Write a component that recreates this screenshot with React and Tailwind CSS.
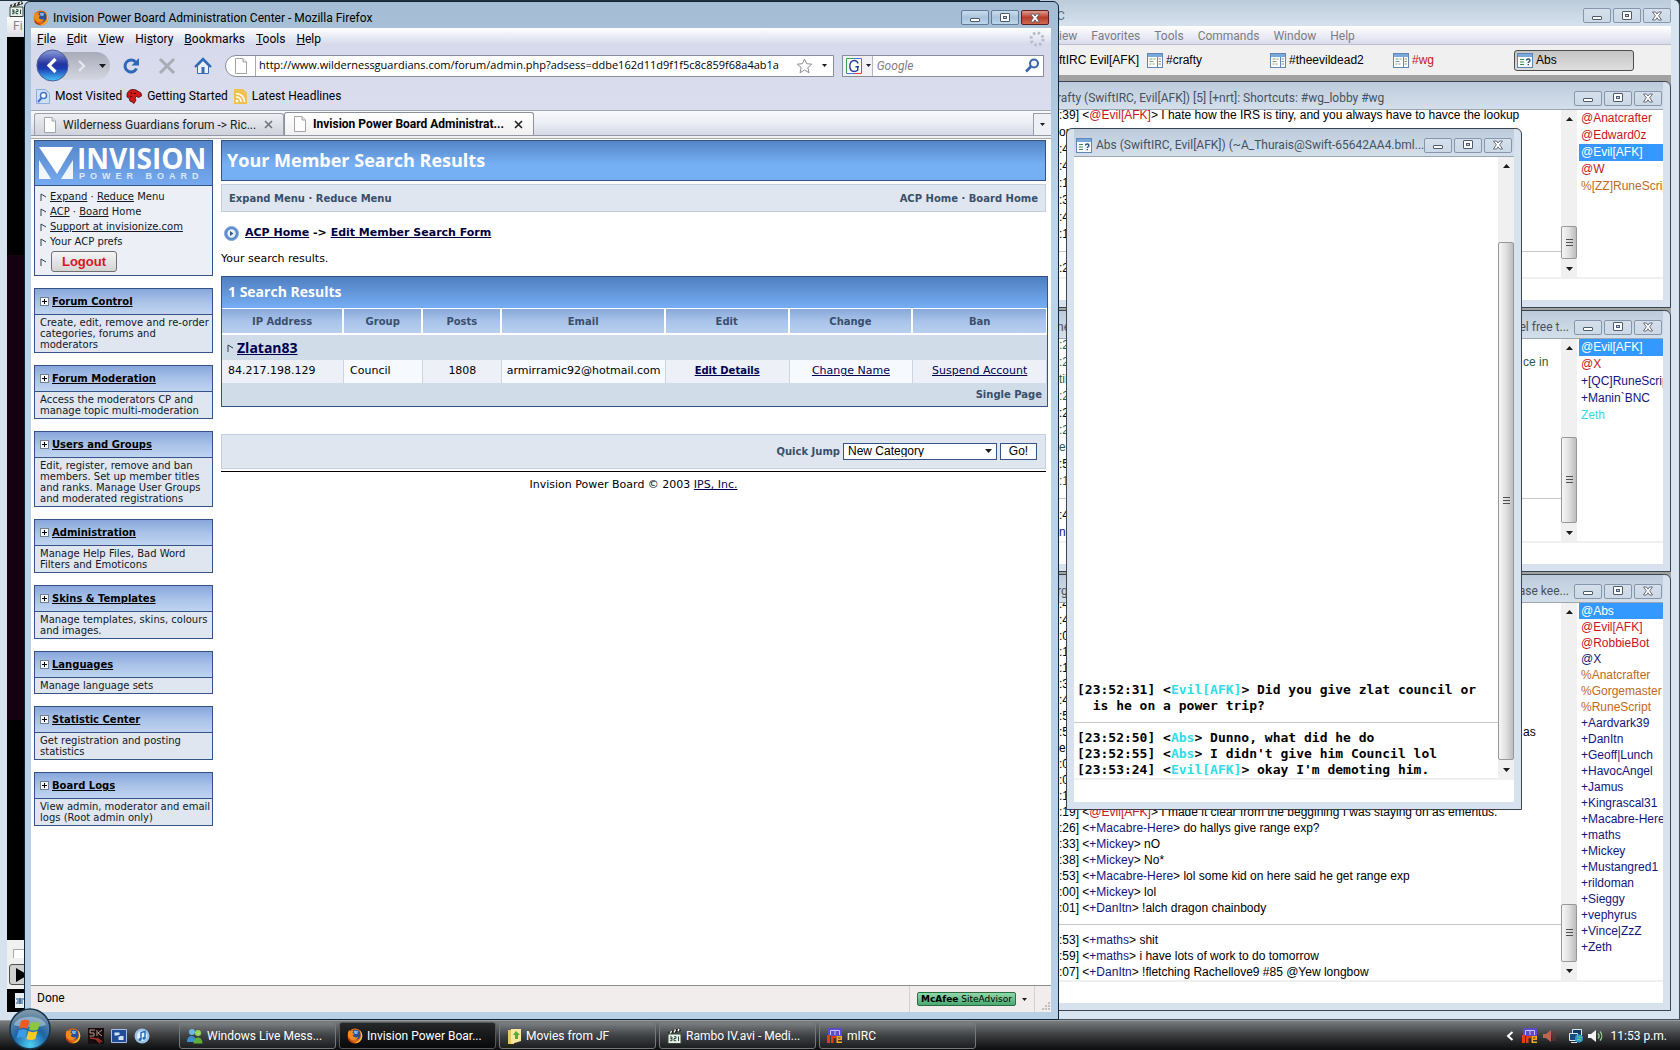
import React, { useState } from "react";

const UI = "font-['Roboto','Open_Sans',sans-serif]";

// Sidebar sections of the admin panel
const sections = [
  { title: "Forum Control", text: "Create, edit, remove and re-order categories, forums and moderators" },
  { title: "Forum Moderation", text: "Access the moderators CP and manage topic multi-moderation" },
  { title: "Users and Groups", text: "Edit, register, remove and ban members. Set up member titles and ranks. Manage User Groups and moderated registrations" },
  { title: "Administration", text: "Manage Help Files, Bad Word Filters and Emoticons" },
  { title: "Skins & Templates", text: "Manage templates, skins, colours and images." },
  { title: "Languages", text: "Manage language sets" },
  { title: "Statistic Center", text: "Get registration and posting statistics" },
  { title: "Board Logs", text: "View admin, moderator and email logs (Root admin only)" },
];

const RED = "text-[#c8141c]";
const NAVY = "text-[#14147c]";
const ORANGE = "text-[#c06a20]";
const GREEN = "text-[#2c5c3c]";

const craftyLog = [
  { time: ":39]", nick: "@Evil[AFK]", color: RED, text: "I hate how the IRS is tiny, and you always have to havce the lookup" },
  { raw: "on" },
  { raw: ":4" },
  { raw: ":4" },
  { raw: ":1" },
  { raw: ":3" },
  { raw: ":4" },
  { raw: ":1" },
  { rule: true },
  { raw: ":2" },
];

const deadLog = [
  { raw: ":2", color: GREEN },
  { raw: ":2", color: GREEN, tail: "ce in" },
  { raw: "til", color: GREEN },
  { raw: ":2", color: GREEN },
  { raw: ":2" },
  { raw: ":2", color: GREEN },
  { raw: "e", color: GREEN },
  { raw: ":5" },
  { raw: ":1", color: GREEN },
  { rule: true },
  { raw: ":4" },
  { raw: "n", color: NAVY },
];

const wgLog = [
  { raw: ":4" },
  { raw: ":4" },
  { raw: ":0" },
  { raw: ":1" },
  { raw: ":1" },
  { raw: ":3" },
  { raw: ":4" },
  { raw: ":5" },
  { raw: ":5", tail: "as" },
  { raw: "e" },
  { raw: ":0" },
  { raw: ":0" },
  { raw: ":1" },
  { time: ":19]", nick: "@Evil[AFK]", color: RED, text: "I made it clear from the beggining I was staying on as emeritus." },
  { time: ":26]", nick: "+Macabre-Here", color: NAVY, text: "do hallys give range exp?" },
  { time: ":33]", nick: "+Mickey", color: NAVY, text: "nO" },
  { time: ":38]", nick: "+Mickey", color: NAVY, text: "No*" },
  { time: ":53]", nick: "+Macabre-Here", color: NAVY, text: "lol some kid on here said he get range exp" },
  { time: ":00]", nick: "+Mickey", color: NAVY, text: "lol" },
  { time: ":01]", nick: "+DanItn", color: NAVY, text: "!alch dragon chainbody" },
  { rule: true },
  { time: ":53]", nick: "+maths", color: NAVY, text: "shit" },
  { time: ":59]", nick: "+maths", color: NAVY, text: "i have lots of work to do tomorrow" },
  { time: ":07]", nick: "+DanItn", color: NAVY, text: "!fletching Rachellove9 #85 @Yew longbow" },
];

const craftyNicks = [
  ["@Anatcrafter", RED],
  ["@Edward0z", RED],
  ["@Evil[AFK]", RED],
  ["@W", RED],
  ["%[ZZ]RuneScript", ORANGE],
];

const deadNicks = [
  ["@Evil[AFK]", RED],
  ["@X", RED],
  ["+[QC]RuneScript", NAVY],
  ["+Manin`BNC", NAVY],
  ["Zeth", "text-[#30dce8]"],
];

const wgNicks = [
  ["@Abs", RED],
  ["@Evil[AFK]", RED],
  ["@RobbieBot", RED],
  ["@X", NAVY],
  ["%Anatcrafter", ORANGE],
  ["%Gorgemaster", ORANGE],
  ["%RuneScript", ORANGE],
  ["+Aardvark39", NAVY],
  ["+DanItn", NAVY],
  ["+Geoff|Lunch", NAVY],
  ["+HavocAngel", NAVY],
  ["+Jamus", NAVY],
  ["+Kingrascal31", NAVY],
  ["+Macabre-Here", NAVY],
  ["+maths", NAVY],
  ["+Mickey", NAVY],
  ["+Mustangred1", NAVY],
  ["+rildoman", NAVY],
  ["+Sieggy", NAVY],
  ["+vephyrus", NAVY],
  ["+Vince|ZzZ", NAVY],
  ["+Zeth", NAVY],
];

/* ---------- icons ---------- */

function FirefoxIcon({ size = 16 }) {
  return (
    <svg width={size} height={size} viewBox="0 0 16 16" className="shrink-0">
      <circle cx="8" cy="8" r="7.4" fill="#d9661a" />
      <circle cx="8.6" cy="6.8" r="5" fill="#2c4f96" />
      <path d="M7 3.2c1.6-.9 3.6-.5 4.6.5-1 .1-1.4.7-1 1.4.4.8-.6 1.3-1.4 1-.9-.3-2.400-.4-2.200-2.900z" fill="#7fb4e6" />
      <path d="M1 4.200 2.200 2l1 1.400c1.300-.9 2.600-.7 3.400-.2-.9.5-1.200 1.100-1 1.800l1.700.4c-.2.900-1 1.200-1.500 1.600.2 2.400 3.300 3.100 5.200 1.700-.6 2.900-3.900 4.300-6.600 3.100C1.600 10.500.400 7.500 1 4.200z" fill="#f28a1e" />
      <path d="M12.600 2.300c2.600 2 3.400 5.600 1.900 8.700-1.600 3.200-5.300 4.700-8.700 3.600 3.900.2 7.300-2 8-5.600.4-2.500-.1-4.500-1.200-6.700z" fill="#fbc52c" />
      <path d="M2 10c1.200 3 4 4.400 7 4.100-2.600 1.300-6 .4-7.500-2.100z" fill="#b93a12" />
    </svg>
  );
}

function PageIcon() {
  return (
    <svg width="14" height="16" viewBox="0 0 14 16" className="shrink-0">
      <path d="M1.500.5h7.500l3.500 3.500v11.500h-11z" fill="#fdfdfd" stroke="#a4a4a8" />
      <path d="M9 .5v3.500h3.500" fill="#e6e6ea" stroke="#a4a4a8" />
    </svg>
  );
}

function ChannelIcon() {
  return (
    <svg width="16" height="15" viewBox="0 0 16 15" className="shrink-0">
      <rect x=".5" y=".5" width="15" height="14" fill="#fff" stroke="#5f86b4" />
      <path d="M1 1h14v3H1z" fill="#79a8dc" />
      <path d="M10.500 4v10" stroke="#5f86b4" />
      <path d="M2.500 6h3m1 0h2m-6 2.500h4m-4 2.500h2m1 0h2m4-5h2.500m-2.500 2.500h2.500m-2.500 2.500h2.500" stroke="#8a9c74" />
    </svg>
  );
}

function QueryIcon() {
  return (
    <svg width="16" height="15" viewBox="0 0 16 15" className="shrink-0">
      <rect x=".5" y=".5" width="15" height="14" fill="#f4faff" stroke="#5f86b4" />
      <path d="M1 1h14v3H1z" fill="#79a8dc" />
      <path d="M3 6.500h4m-4 2.500h4m-4 2.500h4" stroke="#3f8a50" />
      <path d="M9.500 7.500c0-2 3.500-2 3.500 0 0 1.300-1.700 1.200-1.700 2.500m0 1v1.200" stroke="#28507c" strokeWidth="1.300" fill="none" />
    </svg>
  );
}

function MircIcon() {
  return (
    <svg width="16" height="17" viewBox="0 0 16 17" className="shrink-0">
      <path d="M1 1h14v8H1z" fill="#5a4cc8" />
      <path d="M3.500 8V3.500h9V8M8 3.500V8" stroke="#c8c0ff" fill="none" />
      <path d="M0 8h3v8H0zM4 9h5v2H6.500v5H4z" fill="#e83c18" />
      <path d="M9.500 9H15v4h-4v1.500h4V16H9.500zM11 10.500v1h2.500v-1z" fill="#f8a820" fillRule="evenodd" />
    </svg>
  );
}

function ClapperIcon() {
  return (
    <svg width="15" height="16" viewBox="0 0 15 16" className="shrink-0">
      <path d="M1 4 13 0l1 3L2 7z" fill="#222" />
      <path d="m3 6 1.500-3M7 4.500 8.500 1.500M11 3.300l1-2.600" stroke="#f4f4f4" strokeWidth="1.500" />
      <path d="M1 6h13v9.500H1z" fill="#e9efe9" stroke="#3a4a3a" />
      <path d="M3 9h2v1.700H3.500h1.500v2H3M7 8.700h2v1.800H7v2.200h2.200M11.500 8.500v4.500" stroke="#2c5040" fill="none" />
    </svg>
  );
}

function Arrow({ up }) {
  return (
    <svg width="7" height="4" viewBox="0 0 7 4" className="shrink-0">
      <path d={up ? "M0 4 3.500 0 7 4z" : "M0 0h7L3.500 4z"} fill="#1c1c1c" />
    </svg>
  );
}

function SmallArrow() {
  return (
    <svg width="5" height="3" viewBox="0 0 7 4" className="shrink-0">
      <path d="M0 0h7L3.500 4z" fill="#1c1c1c" />
    </svg>
  );
}

function StartOrb() {
  return (
    <svg width="42" height="42" viewBox="0 0 42 42">
      <defs>
        <radialGradient id="orb" cx="50%" cy="90%" r="85%">
          <stop offset="0" stopColor="#4fd0f4" />
          <stop offset=".5" stopColor="#1c64a4" />
          <stop offset="1" stopColor="#7f97a8" />
        </radialGradient>
      </defs>
      <circle cx="21" cy="21" r="20" fill="url(#orb)" stroke="#15344c" strokeWidth="1.500" />
      <path d="M5 17C8 6 34 6 37 17c-8 3-24 3-32 0z" fill="#fff" opacity=".35" />
      <path d="M12 13c3-2 6-1.500 8.500 0l-2 8c-2.500-1.500-5-1.700-8.500 0z" fill="#ee5a24" />
      <path d="M22 13.500c3 1.500 6 1.500 9.500 0l-2.500 8c-3 1.400-6 1.200-9 0z" fill="#8cc63c" />
      <path d="M9.500 22.500c3-1.700 6-1.300 8.500 0l-2 8c-2.500-1.600-5.500-1.600-8.500 0z" fill="#3c9ae8" />
      <path d="M19.500 23c3 1.500 6 1.500 9 0l-2.200 8c-3 1.400-6 1.200-9 0z" fill="#fcc828" />
    </svg>
  );
}

/* ---------- shared window parts ---------- */

function CaptionButtons({ red, onGlass }) {
  const base = onGlass
    ? "border-[#5f7c9a] bg-linear-to-b from-[#c9dcec] via-[#a9c3dc] to-[#bdd6ea]"
    : "border-[#8796aa] bg-linear-to-b from-[#d5e0eb] to-[#cbd8e6]";
  const box = "flex h-[15px] w-[28px] shrink-0 items-center justify-center rounded-[2px] border";
  return (
    <div className="flex shrink-0 gap-[2px]">
      <button aria-label="Minimize" className={`${box} ${base}`}>
        <svg width="12" height="10" viewBox="0 0 12 10">
          <rect x="1.500" y="5.500" width="9" height="3" rx=".5" fill="#fff" stroke="#4c5a6c" />
        </svg>
      </button>
      <button aria-label="Maximize" className={`${box} ${base}`}>
        <svg width="12" height="10" viewBox="0 0 12 10">
          <rect x="1.500" y=".5" width="9" height="8" rx=".5" fill="#fff" stroke="#4c5a6c" />
          <rect x="4.500" y="3.500" width="3" height="2" fill="#c4d4e4" stroke="#4c5a6c" />
        </svg>
      </button>
      <button
        aria-label="Close"
        className={`${box} ${red ? "border-[#5c2020] bg-linear-to-b from-[#dc9c90] via-[#b83c2c] to-[#d06850]" : base}`}
      >
        <svg width="12" height="10" viewBox="0 0 12 10">
          <path d="M1.500 1h3L6 3l1.500-2h3L7.700 4.800 10.500 9h-3L6 6.800 4.500 9h-3l2.800-4.200z" fill="#fff" stroke="#4c4f60" strokeWidth=".8" />
        </svg>
      </button>
    </div>
  );
}

// before / thumb / after are the flex shares of the track
function Scrollbar({ before, thumb, after }) {
  return (
    <div className="flex w-4 shrink-0 flex-col items-center bg-[#f0f0f0]">
      <div className="flex h-[17px] shrink-0 items-center"><Arrow up /></div>
      <div className="basis-0" style={{ flexGrow: before }} />
      <div
        className="flex w-full basis-0 flex-col items-center justify-center gap-[2px] rounded-[2px] border border-[#989898] bg-linear-to-r from-[#f6f6f6] via-[#e0e0e0] to-[#bcbcbc]"
        style={{ flexGrow: thumb }}
      >
        <i className="h-px w-[7px] bg-[#505050]" />
        <i className="h-px w-[7px] bg-[#505050]" />
        <i className="h-px w-[7px] bg-[#505050]" />
      </div>
      <div className="basis-0" style={{ flexGrow: after }} />
      <div className="flex h-[17px] shrink-0 items-center"><Arrow /></div>
    </div>
  );
}

function LogRow({ row, rowClass }) {
  if (row.rule) {
    return (
      <div className={`flex shrink-0 items-center ${rowClass}`}>
        <hr className="w-full border-[#c8c8c8]" />
      </div>
    );
  }
  if (row.raw) {
    return (
      <div className={`flex shrink-0 pl-[11px] ${rowClass} ${row.color || ""}`}>
        <span className={row.tail ? "w-[464px]" : ""}>{row.raw}</span>
        {row.tail && <span>{row.tail}</span>}
      </div>
    );
  }
  return (
    <div className={`shrink-0 pl-[11px] ${rowClass}`}>
      {row.time} &lt;<span className={row.color}>{row.nick}</span>&gt; {row.text}
    </div>
  );
}

function ChannelWindow({ className, title, titleEnd, log, nicks, selected, rowClass, bar }) {
  return (
    <section className={`flex flex-col rounded-t-md border border-[#3c4450] bg-[#d8e2ee] px-[7px] pb-[7px] ${className}`}>
      <header className={`flex h-[28px] shrink-0 items-center gap-1 border-b border-[#9aa6b4] bg-linear-to-b from-[#bccbdb] to-[#d4dfeb] pl-[9px] pr-px pt-[5px] text-xs text-[#46525f] ${UI}`}>
        <span className="grow whitespace-nowrap">{title}</span>
        <span className="whitespace-nowrap pr-px">{titleEnd}</span>
        <CaptionButtons />
      </header>
      <div className="flex min-h-0 grow bg-white text-xs">
        <div className="flex min-w-0 grow flex-col justify-end overflow-hidden whitespace-nowrap">
          {log.map((row, i) => (
            <LogRow key={i} row={row} rowClass={rowClass} />
          ))}
        </div>
        <Scrollbar {...bar} />
        <ul className="ml-[2px] w-[84px] shrink-0 overflow-hidden whitespace-nowrap">
          {nicks.map(([nick, color]) => (
            <li key={nick} className={`pl-[2px] ${rowClass} ${nick === selected ? "bg-[#3399ff] text-white" : color}`}>
              {nick}
            </li>
          ))}
        </ul>
      </div>
      <input aria-label="Message" className="h-[23px] shrink-0 border-t-2 border-[#f0f0f0] bg-white px-2 text-xs outline-none" />
    </section>
  );
}

/* ---------- mIRC ---------- */

function MircWindow() {
  const menus = ["iew", "Favorites", "Tools", "Commands", "Window", "Help"];
  return (
    <div className="absolute bottom-[30px] left-[1040px] right-0 top-0 flex flex-col rounded-tr-md border-b border-r border-[#44505c] bg-[#d8e4ef] pb-2 pr-[8px]">
      <div className={`flex h-[26px] shrink-0 items-center justify-between bg-linear-to-b from-[#bccbda] to-[#d6e2ee] pl-[17px] pt-[5px] text-xs ${UI}`}>
        <span className="text-[#5c6a78]">C</span>
        <CaptionButtons />
      </div>
      <nav className={`flex h-[19px] shrink-0 items-center gap-[14px] border-b border-[#bcbccc] bg-linear-to-b from-white to-[#dadcec] pl-[19px] pt-px text-xs text-[#7c7c84] ${UI}`}>
        {menus.map((m) => (
          <button key={m}>{m}</button>
        ))}
      </nav>
      <div className="flex h-[30px] shrink-0 items-center bg-[#f0f0f0] pl-[19px] text-xs text-black">
        <button className="w-[88px] text-left">ftIRC Evil[AFK]</button>
        <button className="flex w-[123px] items-center gap-[3px]"><ChannelIcon />#crafty</button>
        <button className="flex w-[123px] items-center gap-[3px]"><ChannelIcon />#theevildead2</button>
        <button className={`flex w-[121px] items-center gap-[3px] ${RED}`}><ChannelIcon />#wg</button>
        <button className="flex h-[21px] w-[120px] items-center gap-[3px] rounded-[3px] border border-[#4c4c4c] bg-linear-to-b from-[#c4c4c4] to-[#dedede] px-[2px]">
          <QueryIcon />Abs
        </button>
      </div>
      <div className="flex min-h-0 grow flex-col gap-[2px] bg-[#a2a2a2] pt-[6px]">
        <ChannelWindow
          className="h-[227px]"
          title="rafty (SwiftIRC, Evil[AFK]) [5] [+nrt]: Shortcuts: #wg_lobby #wg"
          log={craftyLog}
          nicks={craftyNicks}
          selected="@Evil[AFK]"
          rowClass="h-[17px] leading-[17px]"
          bar={{ before: 101, thumb: 31, after: 1 }}
        />
        <ChannelWindow
          className="h-[262px]"
          title="ne"
          titleEnd="el free t..."
          log={deadLog}
          nicks={deadNicks}
          selected="@Evil[AFK]"
          rowClass="h-[17px] leading-[17px]"
          bar={{ before: 81, thumb: 85, after: 1 }}
        />
        <ChannelWindow
          className="min-h-0 grow"
          title="rg"
          titleEnd="ase kee..."
          log={wgLog}
          nicks={wgNicks}
          selected="@Abs"
          rowClass="h-[16px] leading-[16px]"
          bar={{ before: 286, thumb: 57, after: 1 }}
        />
      </div>
    </div>
  );
}

function QueryWindow() {
  const cyan = "text-[#30dce8]";
  return (
    <section className="absolute left-[1066px] top-[128px] flex h-[682px] w-[456px] flex-col rounded-t-md border border-[#3c4450] bg-[#d8e2ee] px-[7px] pb-[7px]">
      <header className={`flex h-[28px] shrink-0 items-center gap-1 border-b border-[#9aa6b4] bg-linear-to-b from-[#bccbdb] to-[#d4dfeb] pl-[2px] pr-[2px] pt-[5px] text-xs text-[#46525f] ${UI}`}>
        <QueryIcon />
        <span className="min-w-0 grow whitespace-nowrap">Abs (SwiftIRC, Evil[AFK]) (~A_Thurais@Swift-65642AA4.bml...</span>
        <CaptionButtons />
      </header>
      <div className="flex min-h-0 grow bg-white">
        <div className="flex grow flex-col justify-end whitespace-pre font-['DejaVu_Sans_Mono',monospace] text-[13px] font-bold leading-[16px] text-black">
          <p className="pl-[3px]">[23:52:31] &lt;<span className={cyan}>Evil[AFK]</span>&gt; Did you give zlat council or</p>
          <p className="pl-[3px]">{"  is he on a power trip?"}</p>
          <div className="flex h-4 items-center"><hr className="w-full border-[#c8c8c8]" /></div>
          <p className="pl-[3px]">[23:52:50] &lt;<span className={cyan}>Abs</span>&gt; Dunno, what did he do</p>
          <p className="pl-[3px]">[23:52:55] &lt;<span className={cyan}>Abs</span>&gt; I didn't give him Council lol</p>
          <p className="pl-[3px]">[23:53:24] &lt;<span className={cyan}>Evil[AFK]</span>&gt; okay I'm demoting him.</p>
        </div>
        <Scrollbar before={68} thumb={518} after={1} />
      </div>
      <input aria-label="Message to Abs" className="h-[24px] shrink-0 border-t-2 border-[#f0f0f0] bg-white px-2 text-xs outline-none" />
    </section>
  );
}

/* ---------- Firefox ---------- */

function BrowserChrome() {
  const [url, setUrl] = useState("http://www.wildernessguardians.com/forum/admin.php?adsess=ddbe162d11d9f1f5c8c859f68a4ab1a");
  const menus = [["", "F", "ile"], ["", "E", "dit"], ["", "V", "iew"], ["Hi", "s", "tory"], ["", "B", "ookmarks"], ["", "T", "ools"], ["", "H", "elp"]];
  return (
    <div className={`shrink-0 text-xs text-black ${UI}`}>
      <div className="flex flex-col bg-linear-to-b from-white via-[#d6daec] via-20% to-[#dadded]">
        <nav className="flex h-[21px] items-center gap-[11px] px-[6px]">
          {menus.map(([a, key, b]) => (
            <button key={key + b}>{a}<u>{key}</u>{b}</button>
          ))}
          <svg width="16" height="16" viewBox="0 0 16 16" className="ml-auto">
            <circle cx="8" cy="8" r="6" fill="none" stroke="#b8bcc8" strokeWidth="3" strokeDasharray="2.400 2.300" />
          </svg>
        </nav>

        <div className="flex h-[33px] items-center px-[5px]">
          <div className="flex h-[28px] w-[74px] items-center rounded-full bg-linear-to-b from-[#a8acb8] to-[#d4d6e2]">
            <button aria-label="Back" className="shrink-0">
              <svg width="33" height="33" viewBox="0 0 33 33">
                <defs>
                  <linearGradient id="back" x1="0" y1="0" x2="0" y2="1">
                    <stop offset="0" stopColor="#8fa0dc" />
                    <stop offset=".45" stopColor="#2634a0" />
                    <stop offset=".6" stopColor="#1c3cb4" />
                    <stop offset="1" stopColor="#48c8fc" />
                  </linearGradient>
                </defs>
                <circle cx="16.500" cy="16.500" r="15.500" fill="url(#back)" stroke="#4c5c94" />
                <path d="m19.500 10-6.500 6.500 6.500 6.500" fill="none" stroke="#fff" strokeWidth="3.200" />
              </svg>
            </button>
            <button aria-label="Forward" className="ml-[7px]">
              <svg width="12" height="12" viewBox="0 0 12 12"><path d="m3 1 5 5-5 5" fill="none" stroke="#e4e6ee" strokeWidth="2.400" /></svg>
            </button>
            <button aria-label="Recent pages" className="ml-[11px]"><Arrow /></button>
          </div>
          <button aria-label="Reload" className="ml-[12px]">
            <svg width="18" height="18" viewBox="0 0 18 18">
              <path d="M14.500 11.500a6 6 0 1 1-1-6.500" fill="none" stroke="#2c68bc" strokeWidth="3" />
              <path d="M17 1v7.500H9.500z" fill="#2c68bc" />
            </svg>
          </button>
          <button aria-label="Stop" className="ml-[18px]">
            <svg width="18" height="18" viewBox="0 0 18 18"><path d="m2 2 14 14M16 2 2 16" stroke="#a9abb5" strokeWidth="3" /></svg>
          </button>
          <button aria-label="Home" className="ml-[18px]">
            <svg width="18" height="18" viewBox="0 0 18 18">
              <path d="M3.500 9v7.500h11V9L9 3.500z" fill="#e8f0fa" stroke="#3a6cb4" />
              <path d="m1 10 8-8 8 8" fill="none" stroke="#2c68bc" strokeWidth="2.400" />
              <path d="M7.500 10h3v6.500h-3z" fill="#3a6cb4" />
            </svg>
          </button>
          <div className="ml-[13px] flex h-[22px] min-w-0 grow items-center rounded-l-full border border-[#8a8e9c] bg-white">
            <span className="flex h-full w-[30px] shrink-0 items-center justify-center border-r border-[#a8acb8]"><PageIcon /></span>
            <input
              aria-label="Location"
              value={url}
              onChange={(e) => setUrl(e.target.value)}
              className="ml-[3px] min-w-0 grow bg-transparent font-['Open_Sans','Noto_Sans',sans-serif] text-[11px] outline-none"
            />
            <svg width="17" height="16" viewBox="0 0 17 16" className="shrink-0">
              <path d="m8.500 1 2.100 4.700 5.100.5-3.900 3.400 1.200 5.100-4.500-2.700L4 14.700l1.200-5.100L1.300 6.200l5.100-.5z" fill="#fff" stroke="#8c8c94" />
            </svg>
            <span className="ml-[9px] mr-[6px]"><SmallArrow /></span>
          </div>
          <div className="ml-2 flex h-[22px] w-[202px] items-center border border-[#8a8e9c] bg-white">
            <button aria-label="Search engine" className="flex h-full w-[31px] items-center gap-1 border-r border-[#b4b8c4] bg-[#f2f2f6] pl-[3px]">
              <svg width="16" height="16" viewBox="0 0 16 16">
                <path d="M0 0h16v16H0z" fill="#fff" />
                <path d="M.5 8V.500h8M.5 8v7.500" fill="none" stroke="#3ca050" />
                <path d="M8 .500h7.500V8" fill="none" stroke="#3c78d8" />
                <path d="M15.500 8v7.500H8" fill="none" stroke="#d84030" />
                <path d="M.5 15.500H8" stroke="#3c78d8" />
                <path d="M12 5.500C11.500 3.500 10 2.500 8.200 2.500 5.500 2.500 3.800 4.700 3.800 8s1.700 5.500 4.400 5.500c1.500 0 2.600-.400 3.500-1.200V9M9.500 8.800H13" fill="none" stroke="#24409c" strokeWidth="1.400" />
              </svg>
              <SmallArrow />
            </button>
            <input aria-label="Search" placeholder="Google" className="ml-1 min-w-0 grow italic outline-none placeholder:text-[#808080]" />
            <svg width="15" height="15" viewBox="0 0 15 15" className="mr-[3px] shrink-0">
              <circle cx="9" cy="5.500" r="4" fill="#eef4fc" stroke="#3c64ac" strokeWidth="2" />
              <path d="m6 8.500-5 5" stroke="#3c64ac" strokeWidth="2.600" />
            </svg>
          </div>
          <span className="w-[2px]" />
        </div>

        <div className="flex h-[28px] items-center pl-[5px]">
          <button className="flex items-center gap-[5px]">
            <svg width="14" height="15" viewBox="0 0 14 15">
              <path d="M.5.500h9l4 4v10H.5z" fill="#cfe0f6" stroke="#8cace0" />
              <circle cx="7.500" cy="6.500" r="3" fill="#fff" stroke="#4474c0" strokeWidth="1.500" />
              <path d="m5.500 9-3.500 4" stroke="#4474c0" strokeWidth="2" />
            </svg>
            Most Visited
          </button>
          <button className="ml-1 flex items-center gap-[5px]">
            <svg width="16" height="15" viewBox="0 0 16 15">
              <path d="M1 5C2 1 6-.500 10 1l5 3 .5 3-3 1.500-2-1L9 9l1 2-2 3.500L6 13l-2-1-1-3-2-1z" fill="#d01818" stroke="#4c0808" strokeWidth=".8" />
              <path d="M8 4.500h2M4 7l2 1M5 3l1 2" stroke="#300404" />
            </svg>
            Getting Started
          </button>
          <button className="ml-[6px] flex items-center gap-[5px]">
            <svg width="13" height="15" viewBox="0 0 13 15">
              <path d="M0 0h9l4 4v11H0z" fill="#f2c050" />
              <circle cx="3" cy="12" r="1.400" fill="#fff" />
              <path d="M2 8c3 0 5 2 5 5M2 4.500c5 0 8.500 3.500 8.500 8.500" fill="none" stroke="#fff" strokeWidth="1.500" />
            </svg>
            Latest Headlines
          </button>
        </div>
      </div>

      <div className="flex h-[26px] items-end border-b border-t border-b-[#9498a4] border-t-[#a4a8b4] bg-linear-to-b from-[#f8f9fc] via-[#eceef5] to-[#d4d8e6] pl-[3px]">
        <button className="flex h-[22px] w-[250px] items-center gap-[6px] rounded-t-[3px] border border-b-0 border-[#9a9ea8] bg-linear-to-b from-[#eeeff3] to-[#cfd2dc] px-2 text-[#1c1c1c]">
          <PageIcon />
          <span className="grow truncate text-left">Wilderness Guardians forum -&gt; Ric...</span>
          <svg width="9" height="9" viewBox="0 0 9 9" className="mr-[2px]"><path d="m1 1 7 7M8 1 1 8" stroke="#70747c" strokeWidth="1.600" /></svg>
        </button>
        <button className="flex h-[23px] w-[250px] items-center gap-[6px] rounded-t-[3px] border border-b-0 border-[#8c909c] bg-linear-to-b from-white to-[#f0f0f2] px-2 font-bold">
          <PageIcon />
          <span className="grow whitespace-nowrap text-left">Invision Power Board Administrat...</span>
          <svg width="9" height="9" viewBox="0 0 9 9" className="mr-[2px]"><path d="m1 1 7 7M8 1 1 8" stroke="#202020" strokeWidth="1.600" /></svg>
        </button>
        <button aria-label="List all tabs" className="ml-auto flex h-[22px] w-[18px] items-center justify-center border-l border-t border-[#9a9ea8] bg-[#eef0f6]">
          <SmallArrow />
        </button>
      </div>
      <div className="h-[3px] border-b border-[#a4a8b0] bg-[#f0f0f2]" />
    </div>
  );
}

function Flag() {
  return (
    <svg width="7" height="8" viewBox="0 0 7 8" className="shrink-0">
      <path d="M1 8V1l5 3" fill="none" stroke="#303c50" />
    </svg>
  );
}

function Sidebar() {
  const link = "underline";
  return (
    <aside className="w-[179px] shrink-0 text-[10px] text-[#101828]">
      <div className="border border-[#345487] bg-[#eceff6]">
        <div className="flex h-[45px] items-center gap-[3px] border-b border-[#345487] bg-linear-to-b from-[#5485c8] to-[#76aaf0] pl-1 text-white">
          <svg width="35" height="34" viewBox="0 0 35 34" className="shrink-0">
            <path d="M0 1h34L18 28z" fill="#fff" />
            <path d="M0 14 12 33H0zM34 14v19H22z" fill="#fff" opacity=".9" />
          </svg>
          <div className="font-['Open_Sans','Noto_Sans',sans-serif]">
            <div className="text-[28px] font-bold leading-[27px]">INVISION</div>
            <div className="whitespace-nowrap pl-[2px] font-['Liberation_Sans',sans-serif] text-[9px] font-bold leading-[9px] tracking-[5px] text-[#dbe8fa]">POWER BOARD</div>
          </div>
        </div>
        <ul className="flex flex-col gap-px px-[5px] pb-[3px] pt-1 leading-[14px]">
          <li className="flex items-center gap-[3px]"><Flag /><span><a href="#expand" className={link}>Expand</a> · <a href="#reduce" className={link}>Reduce</a> Menu</span></li>
          <li className="flex items-center gap-[3px]"><Flag /><span><a href="#acp" className={link}>ACP</a> · <a href="#board" className={link}>Board</a> Home</span></li>
          <li className="flex items-center gap-[3px]"><Flag /><a href="#support" className={link}>Support at invisionize.com</a></li>
          <li className="flex items-center gap-[3px]"><Flag /><a href="#prefs">Your ACP prefs</a></li>
          <li className="flex items-center gap-1 pt-px">
            <Flag />
            <button className="h-[21px] w-[66px] rounded-[3px] border border-[#707070] bg-linear-to-b from-[#f4f4f4] to-[#d4d4d4] font-['Liberation_Sans',sans-serif] text-[13px] font-bold text-[#d81420]">Logout</button>
          </li>
        </ul>
      </div>
      {sections.map((s) => (
        <div key={s.title} className="mt-3 border border-[#345487] bg-[#dfe6ef]">
          <div className="flex h-[26px] items-center gap-[3px] border-b border-[#345487] bg-linear-to-b from-[#88a6dc] via-[#a8c2e8] to-[#c0d4f0] pl-[5px]">
            <svg width="9" height="9" viewBox="0 0 9 9" className="shrink-0">
              <rect x=".5" y=".5" width="8" height="8" fill="#f4f8fc" stroke="#70808c" />
              <path d="M2 4.500h5M4.500 2v5" stroke="#000" />
            </svg>
            <a href="#section" className="font-bold text-black underline">{s.title}</a>
          </div>
          <p className="py-[2px] pl-[5px] leading-[11px]">{s.text}</p>
        </div>
      ))}
    </aside>
  );
}

function ResultsTable() {
  const th = "h-[27px] border-2 border-t border-l-0 border-white bg-linear-to-b from-[#88a8d8] via-[#a9c3ea] to-[#b8d0ee] p-0 text-center text-[10px] font-bold text-[#3a4f6c] last:border-r";
  const odd = "border-r border-[#ccd6e2] bg-[#edf1f7]";
  const even = "border-r border-[#ccd6e2] bg-[#f6fafe]";
  const link = "text-[#000050] underline";
  return (
    <div className="-mr-[2px] border border-[#345487] text-[11px]">
      <h2 className="h-[31px] bg-linear-to-b from-[#4f7fc0] to-[#76aef4] pl-[6px] font-['Open_Sans','Noto_Sans',sans-serif] text-sm font-bold leading-[30px] text-white">1 Search Results</h2>
      <table className="w-full table-fixed border-separate border-spacing-0">
        <colgroup>
          <col className="w-[14.8%]" />
          <col className="w-[9.6%]" />
          <col className="w-[9.6%]" />
          <col className="w-[19.8%]" />
          <col className="w-[15%]" />
          <col className="w-[15%]" />
          <col />
        </colgroup>
        <thead>
          <tr>
            {["IP Address", "Group", "Posts", "Email", "Edit", "Change", "Ban"].map((h) => (
              <th key={h} className={th}>{h}</th>
            ))}
          </tr>
        </thead>
        <tbody className="text-black">
          <tr>
            <td colSpan="7" className="h-[25px] bg-[#d1dce9] pl-[5px]">
              <div className="flex items-center gap-[3px]">
                <Flag />
                <a href="#zlatan83" className="font-['Open_Sans','Noto_Sans',sans-serif] text-sm font-bold leading-[16px] text-[#000050] underline">Zlatan83</a>
              </div>
            </td>
          </tr>
          <tr className="h-[23px]">
            <td className={`${odd} pl-[6px]`}>84.217.198.129</td>
            <td className={`${even} pl-[6px]`}>Council</td>
            <td className={`${odd} text-center`}>1808</td>
            <td className={`${even} text-center`}>armirramic92@hotmail.com</td>
            <td className={`${odd} text-center`}><a href="#edit" className={`${link} text-[10px] font-bold`}>Edit Details</a></td>
            <td className={`${even} text-center`}><a href="#change" className={link}>Change Name</a></td>
            <td className={`${odd} text-center`}><a href="#suspend" className={link}>Suspend Account</a></td>
          </tr>
          <tr>
            <td colSpan="7" className="h-[23px] bg-[#d1dce9] pr-[5px] text-right text-[10px] font-bold text-[#3a4f6c]">Single Page</td>
          </tr>
        </tbody>
      </table>
    </div>
  );
}

function AdminPage() {
  return (
    <div className="flex min-h-0 grow overflow-hidden bg-white pl-[3px] pr-[5px] pt-px font-['DejaVu_Sans',sans-serif]">
      <Sidebar />
      <main className="ml-2 min-w-0 grow text-[11px] text-black">
        <h1 className="h-[41px] border border-[#345487] bg-linear-to-b from-[#5484c6] to-[#76b0f4] to-60% pl-[5px] font-['Open_Sans','Noto_Sans',sans-serif] text-lg font-bold leading-[39px] text-white">
          Your Member Search Results
        </h1>
        <div className="mt-[3px] flex h-[28px] items-center justify-between border border-[#c2cfdf] bg-[#dfe6ef] px-[7px] text-[10px] font-bold text-[#3a4f6c]">
          <span><a href="#expand">Expand Menu</a> · <a href="#reduce">Reduce Menu</a></span>
          <span><a href="#acp">ACP Home</a> · <a href="#board">Board Home</a></span>
        </div>
        <div className="mt-[13px] flex items-center gap-[6px] pl-[3px]">
          <svg width="15" height="15" viewBox="0 0 15 15">
            <circle cx="7.500" cy="7.500" r="7" fill="#5c8ccc" stroke="#88a8d8" />
            <circle cx="7.500" cy="7.500" r="4.200" fill="#e8f0fc" />
            <path d="M6 5v5l3.500-2.500z" fill="#2c5ca4" />
          </svg>
          <div className="font-bold leading-[16px]">
            <a href="#acp" className="text-[#000040] underline">ACP Home</a> -&gt; <a href="#form" className="text-[#000040] underline">Edit Member Search Form</a>
          </div>
        </div>
        <p className="mb-[10px] mt-[11px] leading-[14px]">Your search results.</p>
        <ResultsTable />
        <form className="mt-[27px] flex h-[35px] items-center justify-end gap-[3px] border border-[#c2cfdf] bg-[#dfe6ef] pb-px pr-2" onSubmit={(e) => e.preventDefault()}>
          <label htmlFor="jump" className="text-[10px] font-bold text-[#3a4f6c]">Quick Jump</label>
          <div className="relative flex h-[17px] w-[154px] items-center border border-[#345487] bg-white">
            <select id="jump" className="h-full w-full appearance-none pl-1 font-['Liberation_Sans',sans-serif] text-xs leading-none outline-none">
              <option>New Category</option>
            </select>
            <span className="pointer-events-none absolute right-1"><Arrow /></span>
          </div>
          <button className="h-[17px] w-[37px] border border-[#345487] bg-white font-['Liberation_Sans',sans-serif] text-xs leading-none">Go!</button>
        </form>
        <hr className="mt-[2px] border-black" />
        <p className="mt-[6px] text-center leading-[14px]">
          Invision Power Board © 2003 <a href="#ips" className="text-[#000050] underline">IPS, Inc.</a>
        </p>
      </main>
    </div>
  );
}

function FirefoxWindow() {
  return (
    <div className="absolute bottom-[30px] left-6 top-px flex w-[1035px] flex-col rounded-t-md border border-[#0c2438] bg-linear-to-b from-[#a4bcd4] via-[#bcd4ea] via-20% to-[#b8cfe6] pb-[7px] pl-[6px] pr-[7px]">
      <div className={`flex h-[26px] shrink-0 items-center gap-1 pl-[2px] pr-[2px] pt-[5px] text-xs text-black ${UI}`}>
        <FirefoxIcon />
        <span className="grow">Invision Power Board Administration Center - Mozilla Firefox</span>
        <CaptionButtons red onGlass />
      </div>
      <BrowserChrome />
      <AdminPage />
      <footer className={`flex h-[27px] shrink-0 items-stretch border-t border-[#8c8c8c] bg-[#f0edec] text-xs text-black ${UI}`}>
        <span className="grow pl-[6px] leading-[25px]">Done</span>
        <div className="flex w-[125px] items-center gap-[6px] border-l border-[#d4d0d0] pl-[7px]">
          <button className="h-[14px] whitespace-nowrap rounded-[2px] border border-[#2c6c44] bg-linear-to-b from-[#90d8a8] to-[#48a870] px-[3px] font-['DejaVu_Sans',sans-serif] text-[9px] leading-[12px]">
            <b>McAfee</b> SiteAdvisor
          </button>
          <SmallArrow />
        </div>
        <div className="flex w-[17px] items-end justify-end border-l border-[#d4d0d0] p-px">
          <svg width="9" height="9" viewBox="0 0 9 9"><path d="M7 1h2M7 4h2M4 4h2M7 7h2M4 7h2M1 7h2" stroke="#b4b0b0" strokeWidth="1.500" /></svg>
        </div>
      </footer>
    </div>
  );
}

/* ---------- desktop ---------- */

// Strip of the media player that stays visible on the left edge
function PlayerWindow() {
  return (
    <div className="absolute bottom-[30px] left-0 top-0 flex w-[60px] flex-col border-t border-[#20303c] bg-[#d6e3ef] pb-[8px] pl-[7px]">
      <div className="flex h-[16px] shrink-0 items-start pl-[2px]"><ClapperIcon /></div>
      <div className={`h-[20px] shrink-0 bg-linear-to-b from-white to-[#dcdce4] pl-[6px] text-xs leading-[19px] text-[#84848c] ${UI}`}>Fi</div>
      <div className="h-[218px] shrink-0 bg-black" />
      <div className="grow bg-[#140010]" />
      <div className="h-[220px] shrink-0 bg-black" />
      <div className="flex h-[49px] shrink-0 flex-col gap-[6px] bg-[#f0f0f0] pl-[2px] pt-[9px]">
        <div className="ml-[4px] h-[9px] shrink-0 border-l border-t border-[#a8a8a8] bg-white" />
        <button aria-label="Play" className="flex h-[21px] w-[30px] items-center rounded-[3px] border border-[#505050] bg-[#d0d0d0] pl-[6px]">
          <svg width="12" height="14" viewBox="0 0 12 14"><path d="M0 0v14l12-7z" fill="#000" /></svg>
        </button>
      </div>
      <div className="flex h-[23px] shrink-0 items-center bg-black pl-[8px]">
        <svg width="14" height="15" viewBox="0 0 14 15"><path d="M0 0h14v15H0z" fill="#e8f0f4" /><path d="M1 6h8M2 8h6M1 10h7M5 5v6" stroke="#1c4c80" /></svg>
      </div>
    </div>
  );
}

function TaskButton({ icon, active, children }) {
  return (
    <button
      className={`flex h-[27px] w-[157px] items-center gap-1 overflow-hidden whitespace-nowrap rounded-[3px] border px-[7px] ${
        active
          ? "border-[#54585c] bg-linear-to-b from-[#26282a] to-[#08090a]"
          : "border-[#76797c] bg-linear-to-b from-[#7c7f82] via-[#404346] to-[#1c1e20]"
      }`}
    >
      {icon}
      {children}
    </button>
  );
}

function Taskbar() {
  return (
    <div className={`absolute inset-x-0 bottom-0 flex h-[30px] items-center border-t border-[#9a9da0] bg-linear-to-b from-[#7a7d80] via-[#3a3c3e] via-50% to-[#0c0d0e] text-xs text-white ${UI}`}>
      <button aria-label="Start" className="ml-[9px] -mt-px w-[42px] self-end">
        <StartOrb />
      </button>
      <div className="ml-[14px] flex w-[114px] items-center gap-[7px]">
        <FirefoxIcon />
        <svg width="16" height="16" viewBox="0 0 16 16">
          <path d="M0 0h16v16H0z" fill="#180c0c" />
          <path d="M7 2H2v3h4v3H1.500M9 2v6M14 2l-4 3 4 3" fill="none" stroke="#b09890" />
          <path d="m2 10 6 1 4 4M9 10l5 4" stroke="#a03428" strokeWidth="1.500" />
        </svg>
        <svg width="16" height="14" viewBox="0 0 16 14">
          <path d="M.5.500h15v13H.5z" fill="#204c98" stroke="#a4c0e4" />
          <path d="M3 3h6v4H3zM7 6.500h6v5H7z" fill="#d4e4f8" stroke="#204c98" />
        </svg>
        <svg width="16" height="16" viewBox="0 0 16 16">
          <circle cx="8" cy="8" r="7.500" fill="#9cc4e8" />
          <circle cx="8" cy="8" r="5" fill="#e4f0fa" />
          <path d="M7 11.500V4.500l4-1v6.500" fill="none" stroke="#2c6cb8" strokeWidth="1.500" />
          <circle cx="6" cy="11.500" r="1.500" fill="#2c6cb8" />
          <circle cx="10" cy="10.300" r="1.500" fill="#2c6cb8" />
        </svg>
      </div>
      <div className="flex grow gap-[3px]">
        <TaskButton
          icon={
            <svg width="16" height="16" viewBox="0 0 16 16" className="shrink-0">
              <circle cx="5" cy="4" r="3" fill="#6cb8e8" />
              <path d="M0 14c0-8 9-8 9 0z" fill="#3c90d0" />
              <circle cx="11" cy="5" r="3" fill="#98d858" />
              <path d="M6.500 15.500c0-8 9-8 9 0z" fill="#5cb038" />
            </svg>
          }
        >
          Windows Live Mess...
        </TaskButton>
        <TaskButton active icon={<FirefoxIcon />}>Invision Power Boar...</TaskButton>
        <TaskButton
          icon={
            <svg width="15" height="16" viewBox="0 0 15 16" className="shrink-0">
              <path d="M1 2h5l1 2v12H1z" fill="#e8c860" />
              <path d="M4 1h10v12l-8 2.500H4z" fill="#f8e8a0" />
              <path d="m9 3 4 4h-2v4H8V7H6z" fill="#4cb040" />
            </svg>
          }
        >
          Movies from JF
        </TaskButton>
        <TaskButton icon={<ClapperIcon />}>Rambo IV.avi - Medi...</TaskButton>
        <TaskButton icon={<MircIcon />}>mIRC</TaskButton>
      </div>
      <div className="flex items-center gap-1 pr-[13px]">
        <button aria-label="Show hidden icons" className="mr-1">
          <svg width="8" height="10" viewBox="0 0 8 10"><path d="M6.500 1 2 5l4.500 4" fill="none" stroke="#fff" strokeWidth="2" /></svg>
        </button>
        <MircIcon />
        <svg width="14" height="14" viewBox="0 0 14 14" className="mr-2">
          <path d="M1 5h3l5-4v12L4 9H1z" fill="#c06450" />
          <path d="M11 2v10M13 2v10" stroke="#6c3830" />
        </svg>
        <svg width="16" height="16" viewBox="0 0 16 16">
          <path d="M4.500 1.500h9v7h-9z" fill="#103c68" stroke="#dce8f4" />
          <path d="M1.500 5.500h8v7h-8zM3 14.500h6" fill="#184c80" stroke="#dce8f4" />
          <circle cx="11" cy="10.500" r="4" fill="#2c98c8" />
          <path d="M9 9c2-1 3 1 5 0M9 12c1-1 3 0 4 0" stroke="#80d870" fill="none" />
        </svg>
        <svg width="15" height="14" viewBox="0 0 15 14">
          <path d="M0 5h3l5-4v12L3 9H0z" fill="#f4f4f4" />
          <path d="M10 4.500c1.300 1.500 1.300 3.500 0 5M12 2.500c2.400 2.600 2.400 6.400 0 9" stroke="#8cd890" fill="none" strokeWidth="1.300" />
        </svg>
        <span className="ml-1 whitespace-nowrap">11:53 p.m.</span>
      </div>
    </div>
  );
}

export default function App() {
  return (
    <div className="relative h-screen w-full overflow-hidden bg-[#26313c] font-['Liberation_Sans',Arial,sans-serif] text-black">
      <PlayerWindow />
      <MircWindow />
      <QueryWindow />
      <FirefoxWindow />
      <Taskbar />
    </div>
  );
}
